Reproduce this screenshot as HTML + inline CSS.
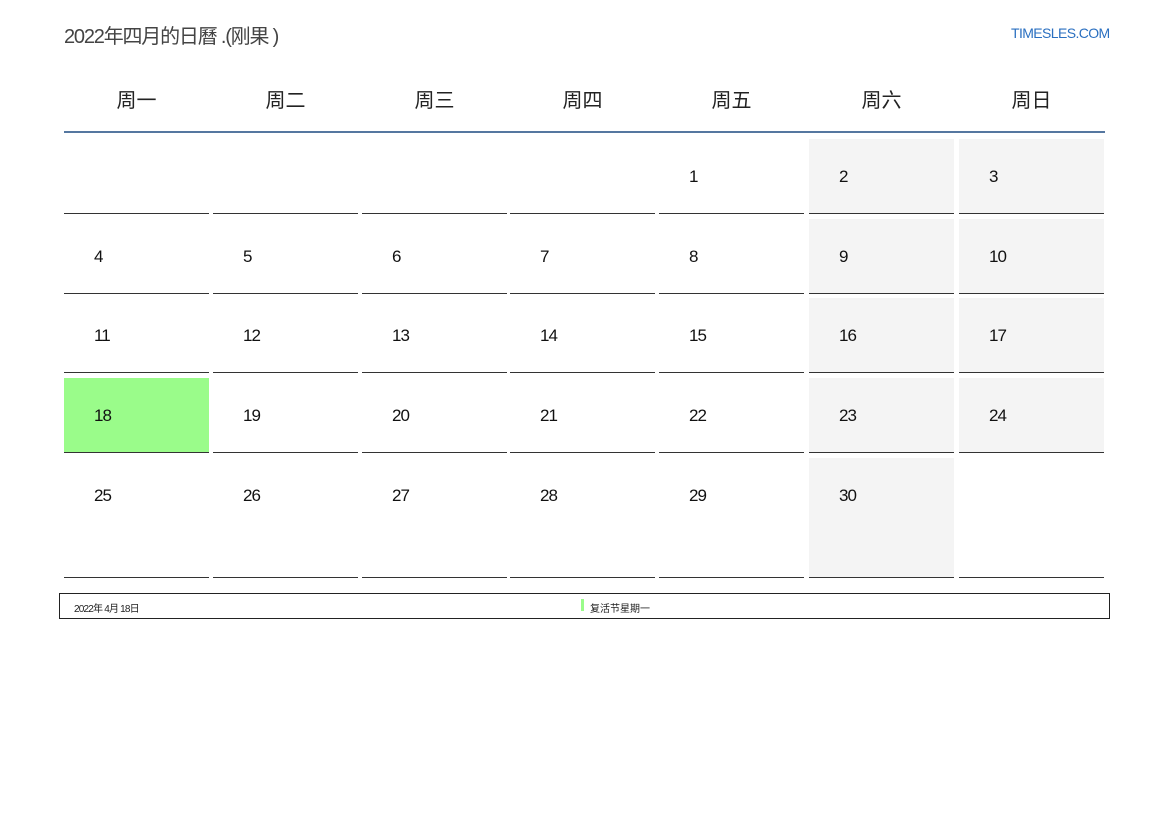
<!DOCTYPE html>
<html><head><meta charset="utf-8"><style>
body{margin:0;width:1169px;height:827px;background:#fff;position:relative;font-family:"Liberation Sans","Noto Sans CJK SC",sans-serif;overflow:hidden}
.a{position:absolute}
.title{left:64px;top:20px;font-size:20px;color:#444;letter-spacing:-1.2px}
.site{left:1011px;top:25px;font-size:14px;color:#2a6fc0;letter-spacing:-0.6px}
.hd{top:84px;width:145px;text-align:center;font-size:20px;color:#222}
.cell{width:145px;border-bottom:1px solid #333}
.cell span{position:absolute;left:30px;font-size:17px;color:#111;letter-spacing:-1px}
.g{background:#f4f4f4}
</style></head><body>
<div class="a title">2022年四月的日曆 .(刚果 )</div>
<div class="a site">TIMESLES.COM</div>
<div class="a" style="left:64px;top:131px;width:1041px;height:2px;background:#5577a0"></div>
<div id="c"></div>
<div class="a" style="left:59px;top:593px;width:1049px;height:24px;border:1px solid #222"></div>
<div class="a" style="left:74px;top:600px;font-size:10px;color:#222;letter-spacing:-0.8px">2022年 4月 18日</div>
<div class="a" style="left:581px;top:599px;width:3px;height:12px;background:#9afc8a"></div>
<div class="a" style="left:590px;top:600px;font-size:10px;color:#222">复活节星期一</div>
<script>
var L=[64,213,362,510,659,809,959],H=["周一","周二","周三","周四","周五","周六","周日"];
var R=[[139,213],[219,293],[298,372],[378,452],[458,577]];
var s="";
for(var i=0;i<7;i++)s+='<div class="a hd" style="left:'+L[i]+'px">'+H[i]+'</div>';
for(var r=0;r<5;r++)for(var c=0;c<7;c++){var d=r*7+c-3;var cls="a cell";
if(c>=5&&d<=30)cls+=" g";var bg=d==18?"background:#9afc8a;":"";
var t=R[r][0],h=R[r][1]-t;
s+='<div class="'+cls+'" style="'+bg+'left:'+L[c]+'px;top:'+t+'px;height:'+h+'px">'+(d>=1&&d<=30?'<span style="top:28px">'+d+'</span>':'')+'</div>';}
document.getElementById("c").innerHTML=s;
</script>
</body></html>
